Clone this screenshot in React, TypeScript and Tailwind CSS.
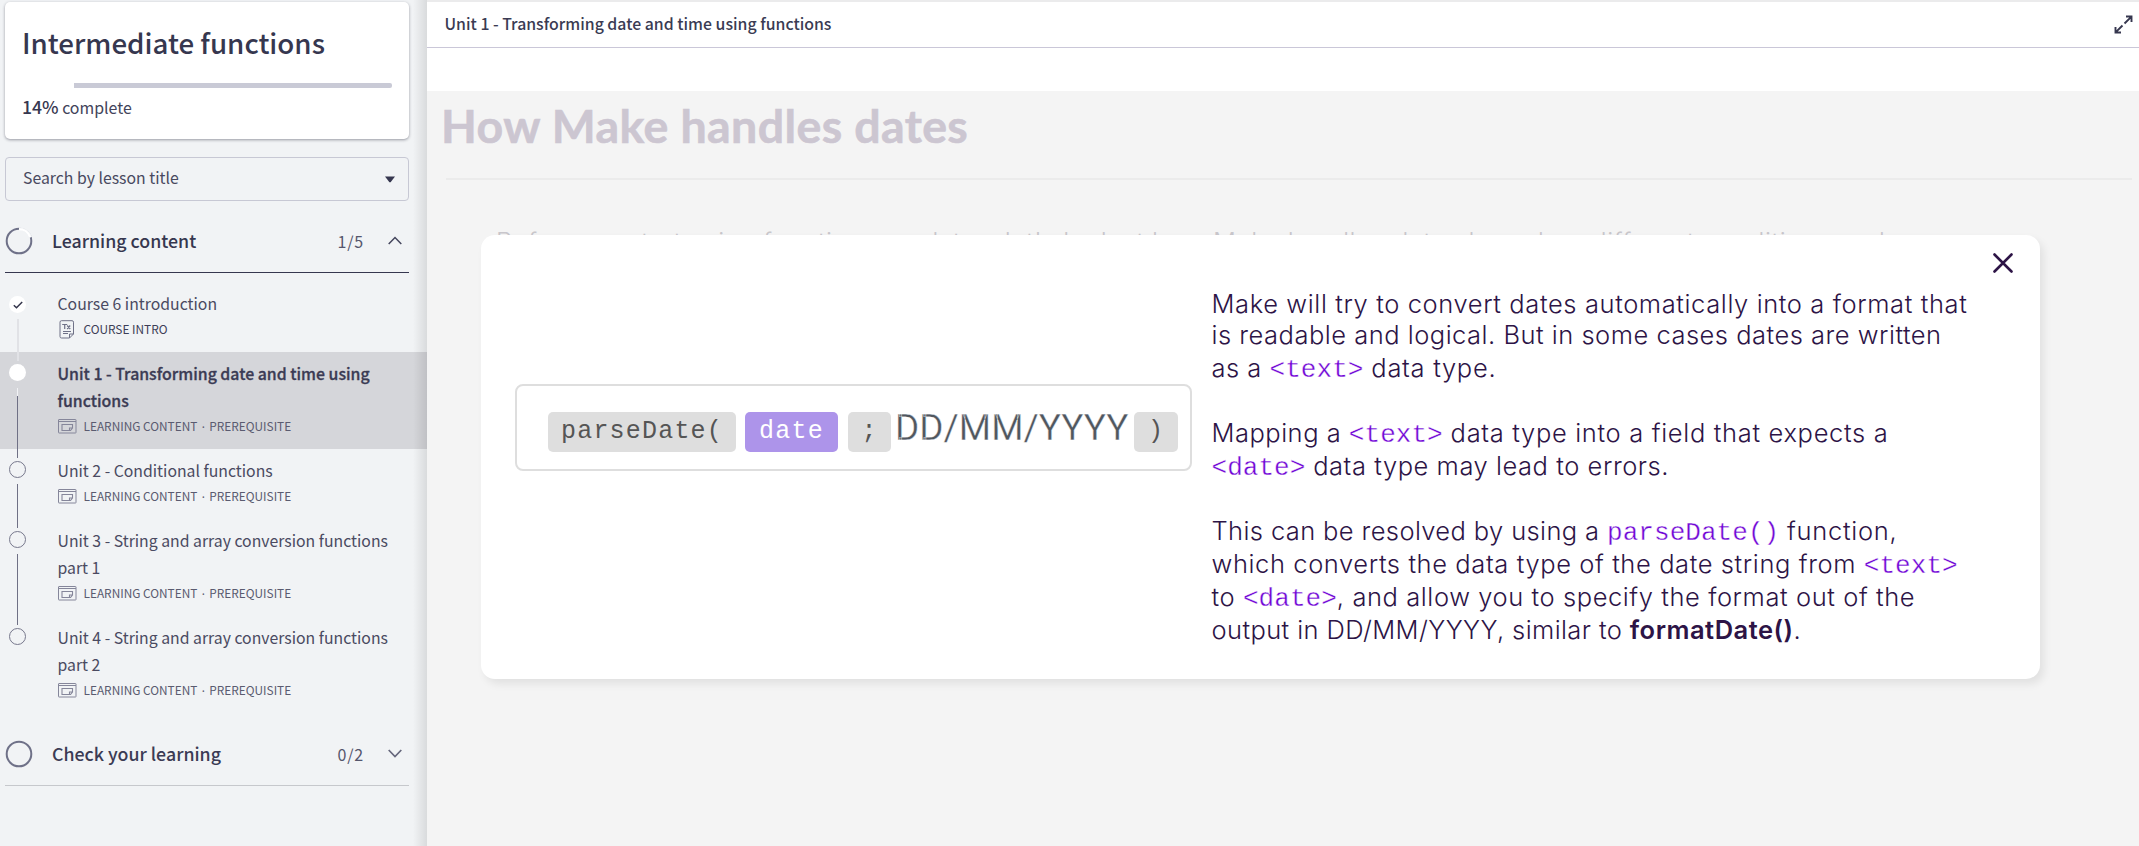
import { ReactNode } from "react";

const NAV_FONT = "font-['Noto_Sans_CJK_SC',sans-serif]";

type Status = "done" | "current" | "todo";
type Unit = { title: string[]; kind: string[]; status: Status; icon: "text" | "slide" };

const units: Unit[] = [
  { title: ["Course 6 introduction"], kind: ["COURSE INTRO"], status: "done", icon: "text" },
  { title: ["Unit 1 - Transforming date and time using", "functions"], kind: ["LEARNING CONTENT", "PREREQUISITE"], status: "current", icon: "slide" },
  { title: ["Unit 2 - Conditional functions"], kind: ["LEARNING CONTENT", "PREREQUISITE"], status: "todo", icon: "slide" },
  { title: ["Unit 3 - String and array conversion functions", "part 1"], kind: ["LEARNING CONTENT", "PREREQUISITE"], status: "todo", icon: "slide" },
  { title: ["Unit 4 - String and array conversion functions", "part 2"], kind: ["LEARNING CONTENT", "PREREQUISITE"], status: "todo", icon: "slide" },
];

function TextIcon() {
  return (
    <svg width="19" height="19" viewBox="0 0 19 19" fill="none" stroke="#6f7187" strokeWidth="1">
      <path d="M3.500 0.700h10.500a1.500 1.500 0 0 1 1.500 1.500v11.800l-4 4h-8a1.500 1.500 0 0 1-1.500-1.500V2.200a1.500 1.500 0 0 1 1.500-1.500zM15.500 14h-4v4" />
      <path d="M4.200 4.500h5M6.700 4.500v4.500M9.200 5.500l3 3.500M12.200 5.500l-3 3.500" strokeWidth="1.200" />
      <path d="M5 11.500h8M5 13.500h5" />
    </svg>
  );
}

function SlideIcon() {
  return (
    <svg width="19" height="15" viewBox="0 0 19 15" fill="none" stroke="#85869a" strokeWidth="1">
      <rect x="0.500" y="0.500" width="17.500" height="13.500" rx="0.500" />
      <path d="M0.500 2.500h17.500" />
      <path d="M4 5.500h10.500v3.500l-2 2.500H4zM14.500 9h-3v2.500" strokeWidth="1.100" />
    </svg>
  );
}

function Marker({ status }: { status: Status }) {
  if (status === "done")
    return (
      <span className="mt-[14px] flex h-[17px] w-[17px] shrink-0 items-center justify-center rounded-full bg-white">
        <svg width="10" height="8" viewBox="0 0 10 8" fill="none" stroke="#33344a" strokeWidth="1.500">
          <path d="M0.800 4.200l2.700 2.500L9.200 1" />
        </svg>
      </span>
    );
  if (status === "current") return <span className="mt-[12px] h-[17px] w-[17px] shrink-0 rounded-full bg-white" />;
  return <span className="mt-[11.500px] h-[17.500px] w-[17.500px] shrink-0 rounded-full border border-[#77788c]" />;
}

function UnitRow({ unit, last }: { unit: Unit; last: boolean }) {
  const current = unit.status === "current";
  return (
    <li className={current ? "flex bg-[#d5d6da]" : "flex"}>
      <div className="relative z-10 flex w-[35px] shrink-0 flex-col items-center">
        <Marker status={unit.status} />
        {!last && unit.status === "done" && <span className="-mb-[9px] mt-[6px] w-[2px] flex-1 bg-[#e1e2e6]" />}
        {!last && unit.status === "current" && (
          <>
            <span className="mt-[7px] h-[8px] w-px bg-[#f1f2f5]" />
            <span className="-mb-[9px] w-px flex-1 bg-[#6f7085]" />
          </>
        )}
        {!last && unit.status === "todo" && <span className="-mb-[9px] mt-[6px] w-px flex-1 bg-[#6f7085]" />}
      </div>
      <div className="pb-[10px] pl-[22.5px] pt-[7.5px]">
        <div
          className={
            current
              ? "text-[15.85px] font-medium leading-[27px] text-[#3b3b54] [-webkit-text-stroke:0.3px_#3b3b54]"
              : "text-[15.8px] leading-[27px] text-[#4a4a61]"
          }
        >
          {unit.title.map((t) => (
            <div key={t} className="whitespace-nowrap">{t}</div>
          ))}
        </div>
        <div className="flex h-[25.500px] items-center whitespace-nowrap text-[11.85px] text-[#5a5b70]">
          <span className="flex w-[26px] shrink-0">
            {unit.icon === "text" ? <TextIcon /> : <SlideIcon />}
          </span>
          <span className={unit.icon === "text" ? "text-[#3d3e57]" : ""}>{unit.kind[0]}</span>
          {unit.kind[1] && (
            <>
              <span className="w-[12px] pt-[3px] text-center font-['Noto_Sans',sans-serif]">·</span>
              <span>{unit.kind[1]}</span>
            </>
          )}
        </div>
      </div>
    </li>
  );
}

function Sidebar() {
  return (
    <aside className={`relative w-[427px] shrink-0 bg-[#f1f3f5] pt-[2px] ${NAV_FONT}`}>
      <div className="ml-[5px] h-[137px] w-[404px] rounded-[5px] bg-white pl-[17px] pr-[17px] pt-[20px] shadow-[0_1px_3px_rgba(40,42,60,0.45)]">
        <h1 className="whitespace-nowrap text-[27.7px] font-medium leading-[40px] text-[#36374f]">Intermediate functions</h1>
        <div className="mt-[21px] flex h-[5px]">
          <div className="w-[52px]" />
          <div className="flex-1 rounded-r-[2px] bg-[#c9cad6]" />
        </div>
        <div className="mt-[6px] whitespace-nowrap text-[15.9px] leading-[26px] text-[#42435a]">
          <span className="text-[17.600px] font-medium text-[#36374f]">14%</span> complete
        </div>
      </div>
      <div className="ml-[5px] mt-[18px] flex h-[44px] w-[404px] items-center justify-between rounded-[4px] border border-[#c7c8d4] pl-[17px] pr-[13px] text-[15.8px] text-[#484960]">
        <span className="-mt-[3px]">Search by lesson title</span>
        <svg width="10" height="7" viewBox="0 0 10 7" fill="#36374f"><path d="M0 0.500h10L5.600 6.300h-1.200z" /></svg>
      </div>
      <div className="ml-[5px] mt-[8px] flex h-[64px] w-[404px] items-center border-b border-[#36374f]">
        <svg width="28" height="28" viewBox="0 0 28 28" fill="none" strokeWidth="2">
          <circle cx="14" cy="14" r="12.300" stroke="#6f7188" />
          <path d="M14 1.700A12.300 12.300 0 0 1 25.700 10.200" stroke="#f1f3f5" strokeWidth="3" />
          <path d="M14 2.200A11.800 11.800 0 0 1 25.200 10.200" stroke="#fff" />
        </svg>
        <span className="ml-[19px] flex-1 text-[17.8px] font-medium text-[#36374f]">Learning content</span>
        <span className="text-[16px] tracking-[0.8px] text-[#55566c]">1/5</span>
        <svg className="ml-[24px] mr-[7px]" width="14" height="9" viewBox="0 0 14 9" fill="none" stroke="#45465d" strokeWidth="1.500"><path d="M0.700 8L7 1.500L13.300 8" /></svg>
      </div>
      <ul className="mt-[9px]">
        {units.map((u, i) => (
          <UnitRow key={u.title.join()} unit={u} last={i === units.length - 1} />
        ))}
      </ul>
      <div className="ml-[5px] mt-[9px] flex h-[64px] w-[404px] items-center border-b border-[#c6c8cc]">
        <svg width="28" height="28" viewBox="0 0 28 28" fill="none" strokeWidth="2"><circle cx="14" cy="14" r="12.300" stroke="#6f7188" /></svg>
        <span className="ml-[19px] flex-1 text-[17.8px] font-medium text-[#3b3b54]">Check your learning</span>
        <span className="text-[16px] tracking-[0.8px] text-[#55566c]">0/2</span>
        <svg className="ml-[24px] mr-[7px]" width="14" height="9" viewBox="0 0 14 9" fill="none" stroke="#66677c" strokeWidth="1.700"><path d="M0.700 1L7 7.500L13.300 1" /></svg>
      </div>
      <div className="absolute inset-y-0 right-0 z-20 w-[14px] bg-linear-to-r from-black/0 to-black/10" />
    </aside>
  );
}

function Code({ children }: { children: ReactNode }) {
  return <code className="font-['Liberation_Mono',monospace] text-[26px] tracking-[0.05px] text-[#7005d6] [-webkit-text-stroke:0.35px_white]">{children}</code>;
}

function Line({ className, children }: { className: string; children: ReactNode }) {
  return <div className={`whitespace-nowrap ${className}`}>{children}</div>;
}

function Pill({ className, children }: { className: string; children: ReactNode }) {
  return (
    <span className={`flex h-[40px] items-center justify-center rounded-[5px] font-['Liberation_Mono',monospace] text-[25px] tracking-[1.2px] ${className}`}>
      {children}
    </span>
  );
}

function Dialog() {
  return (
    <div className="absolute left-[54px] top-[144px] flex h-[444px] w-[1559px] rounded-[14px] bg-white shadow-[4px_5px_8px_rgba(0,0,0,0.08)]">
      <div className="w-[730.5px] pl-[34px] pt-[149px]">
        <div className="flex h-[87px] w-[677px] items-center rounded-[8px] border-[2.500px] border-[#dedede] pl-[31px] pt-[9px]">
          <Pill className="w-[188px] bg-[#dedede] text-[#555]">parseDate(</Pill>
          <Pill className="ml-[9px] w-[93px] bg-[#ad94ea] text-white">date</Pill>
          <Pill className="ml-[10px] w-[43px] bg-[#dedede] text-[#555]">;</Pill>
          <span className="-mt-[8px] ml-[4px] w-[239px] whitespace-nowrap font-['Roboto',sans-serif] text-[37px] leading-[44px] text-[#50575f] [-webkit-text-stroke:0.4px_white]">DD/MM/YYYY</span>
          <Pill className="w-[44px] bg-[#dedede] text-[#555]">)</Pill>
        </div>
      </div>
      <div className="pt-[52px] font-['Inter',sans-serif] text-[25.5px] font-light leading-[33px] text-[#2d1446]">
        <Line className="h-[31px] tracking-[0.61px]">Make will try to convert dates automatically into a format that</Line>
        <Line className="h-[33px] tracking-[0.5px]">is readable and logical. But in some cases dates are written</Line>
        <Line className="h-[65px] tracking-[0.5px]">as a <Code>&lt;text&gt;</Code><span className="tracking-[0.7px]"> data type.</span></Line>
        <Line className="h-[33px] tracking-[0.5px]">Mapping a <Code>&lt;text&gt;</Code><span className="tracking-[0.67px]"> data type into a field that expects a</span></Line>
        <Line className="h-[65px] tracking-[0.55px]"><Code>&lt;date&gt;</Code> data type may lead to errors.</Line>
        <Line className="h-[33px] tracking-[0.38px]">This can be resolved by using a <Code>parseDate()</Code><span className="tracking-[0.7px]"> function,</span></Line>
        <Line className="h-[33px] tracking-[0.6px]">which converts the data type of the date string from <Code>&lt;text&gt;</Code></Line>
        <Line className="h-[33px] tracking-[0.58px]">to <Code>&lt;date&gt;</Code>, and allow you to specify the format out of the</Line>
        <Line className="h-[33px] tracking-[0.4px]">output in DD/MM/YYYY, similar to <b className="font-semibold tracking-[0.5px]">formatDate()</b>.</Line>
      </div>
      <svg className="absolute right-[26px] top-[17px]" width="22" height="22" viewBox="0 0 22 22" fill="none" stroke="#2d1446" strokeWidth="2.600" strokeLinecap="round"><path d="M2.500 2.500l17 17M19.500 2.500l-17 17" /></svg>
    </div>
  );
}

export default function App() {
  return (
    <div className="flex h-[846px] w-[2139px] overflow-hidden bg-[#ebebec]">
      <Sidebar />
      <main className="flex min-w-0 flex-1 flex-col pt-[2px]">
        <header className={`flex h-[46px] shrink-0 items-center justify-between border-b border-[#cac7d8] bg-white pl-[17.500px] pr-[6px] ${NAV_FONT}`}>
          <span className="-mt-[2px] text-[15.85px] font-medium text-[#3a3b53]">Unit 1 - Transforming date and time using functions</span>
          <svg width="19" height="19" viewBox="0 0 19 19" fill="none" stroke="#36374f" strokeWidth="1.900"><path d="M10.500 8.500L17.200 1.800M12 1.500h5.500v5.500M8.500 10.500L1.800 17.200M1.500 12v5.500h5.500" /></svg>
        </header>
        <div className="h-[43px] shrink-0 bg-white" />
        <section className="relative flex-1 bg-[#f4f4f4]">
          <h2 className="ml-[14px] pt-[4px] font-['Lato',sans-serif] text-[46.500px] font-bold leading-[60px] tracking-[0.4px] text-[#ccc6d1] [-webkit-text-stroke:0.6px_#ccc6d1]">How Make handles dates</h2>
          <hr className="ml-[19px] mr-[7px] mt-[23px] border-t-2 border-[#ebebeb]" />
          <div className="flex pl-[69px] pt-[45px] font-['Inter',sans-serif] text-[25.500px] font-light leading-[33px] text-[#c8c6cb]">
            <p className="w-[717px] whitespace-nowrap tracking-[0.4px]">Before we start using functions on dates, let&apos;s look at how</p>
            <p className="whitespace-nowrap tracking-[0.6px]">Make handles dates based on different conditions and</p>
          </div>
          <Dialog />
        </section>
      </main>
    </div>
  );
}
